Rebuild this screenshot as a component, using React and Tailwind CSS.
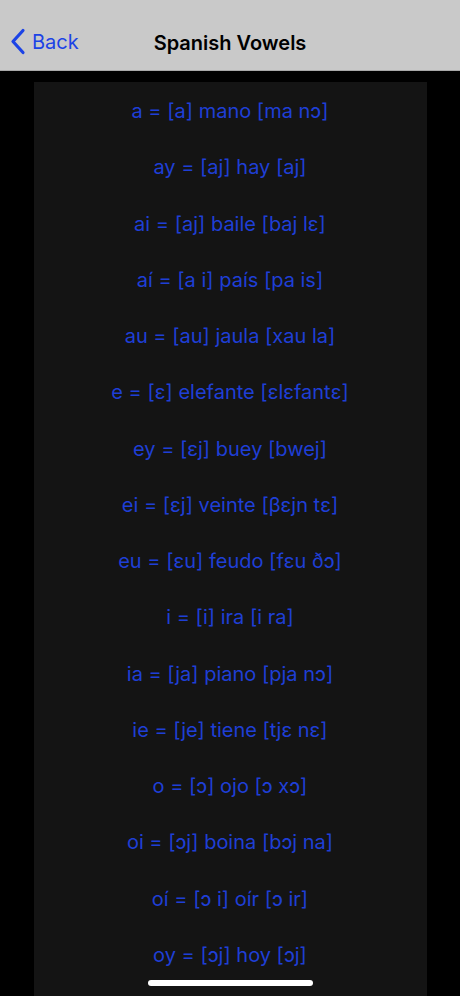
const vowels = [
  "a = [a] mano [ma nɔ]",
  "ay = [aj] hay [aj]",
  "ai = [aj] baile [baj lɛ]",
  "aí = [a i] país [pa is]",
  "au = [au] jaula [xau la]",
  "e = [ɛ] elefante [ɛlɛfantɛ]",
  "ey = [ɛj] buey [bwej]",
  "ei = [ɛj] veinte [βɛjn tɛ]",
  "eu = [ɛu] feudo [fɛu ðɔ]",
  "i = [i] ira [i ra]",
  "ia = [ja] piano [pja nɔ]",
  "ie = [je] tiene [tjɛ nɛ]",
  "o = [ɔ] ojo [ɔ xɔ]",
  "oi = [ɔj] boina [bɔj na]",
  "oí = [ɔ i] oír [ɔ ir]",
  "oy = [ɔj] hoy [ɔj]",
];

export default function App() {
  return (
    <div
      className="relative flex h-[996px] w-[460px] flex-col overflow-hidden bg-black"
      style={{ fontFamily: "Inter, 'Noto Sans', sans-serif" }}
    >
      {/* Nav bar */}
      <div className="relative flex h-[71px] shrink-0 items-end border-b border-[#a8a8a8] bg-[#c9c9c9] pb-[15px]">
        <div className="flex items-center pl-[10px] text-[#1c43e6]">
          <svg width="16" height="27" viewBox="0 0 16 27" fill="none">
            <path d="M13 2.5 L3 13.5 L13 24.5" stroke="#1c43e6" strokeWidth="3.2" strokeLinecap="round" strokeLinejoin="round" />
          </svg>
          <span className="ml-[6px] text-[20px] leading-none">Back</span>
        </div>
        <div className="absolute bottom-[17px] left-0 right-0 text-center text-[20px] font-semibold leading-none text-black">
          Spanish Vowels
        </div>
      </div>

      {/* List */}
      <div className="mx-auto mt-[11px] w-[393px] flex-1 bg-[#141414] pt-[15px]">
        {vowels.map((v) => (
          <div key={v} className="flex h-[56.25px] items-start justify-center text-[20px] leading-[28px] text-[#1f3fd6]">
            {v}
          </div>
        ))}
      </div>

      {/* Home indicator */}
      <div className="absolute bottom-[10px] left-[148px] h-[6px] w-[165px] rounded-full bg-white" />
    </div>
  );
}
